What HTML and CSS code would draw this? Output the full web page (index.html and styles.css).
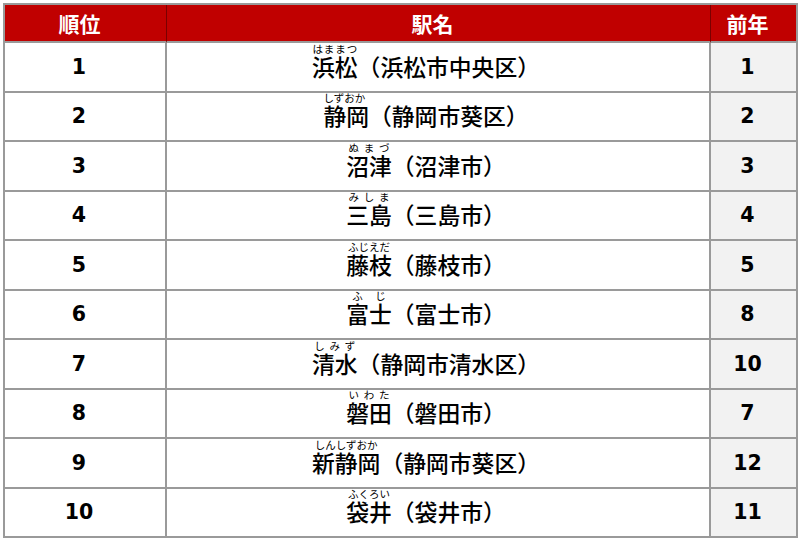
FILE: index.html
```html
<!DOCTYPE html>
<html lang="ja">
<head>
<meta charset="utf-8">
<link rel="stylesheet" href="styles.css">
</head>
<body>
<table class="rank">
  <colgroup><col class="c1"><col class="c2"><col class="c3"></colgroup>
  <thead>
    <tr><th>順位</th><th>駅名</th><th class="last">前年</th></tr>
  </thead>
  <tbody>
    <tr><td class="num">1</td><td class="name"><span class="rb"><span class="rd wide"><span>は</span><span>ま</span><span>ま</span><span>つ</span></span>浜松</span>（浜松市中央区）</td><td class="prev">1</td></tr>
    <tr><td class="num">2</td><td class="name"><span class="rb"><span class="rd left">しずおか</span>静岡</span>（静岡市葵区）</td><td class="prev">2</td></tr>
    <tr><td class="num">3</td><td class="name"><span class="rb"><span class="rd wide"><span>ぬ</span><span>ま</span><span>づ</span></span>沼津</span>（沼津市）</td><td class="prev">3</td></tr>
    <tr><td class="num">4</td><td class="name"><span class="rb"><span class="rd wide"><span>み</span><span>し</span><span>ま</span></span>三島</span>（三島市）</td><td class="prev">4</td></tr>
    <tr><td class="num">5</td><td class="name"><span class="rb"><span class="rd">ふじえだ</span>藤枝</span>（藤枝市）</td><td class="prev">5</td></tr>
    <tr><td class="num">6</td><td class="name"><span class="rb"><span class="rd wide"><span>ふ</span><span>じ</span></span>富士</span>（富士市）</td><td class="prev">8</td></tr>
    <tr><td class="num">7</td><td class="name"><span class="rb"><span class="rd wide"><span>し</span><span>み</span><span>ず</span></span>清水</span>（静岡市清水区）</td><td class="prev">10</td></tr>
    <tr><td class="num">8</td><td class="name"><span class="rb"><span class="rd wide"><span>い</span><span>わ</span><span>た</span></span>磐田</span>（磐田市）</td><td class="prev">7</td></tr>
    <tr><td class="num">9</td><td class="name"><span class="rb"><span class="rd">しんしずおか</span>新静岡</span>（静岡市葵区）</td><td class="prev">12</td></tr>
    <tr><td class="num">10</td><td class="name"><span class="rb"><span class="rd">ふくろい</span>袋井</span>（袋井市）</td><td class="prev">11</td></tr>
  </tbody>
</table>
</body>
</html>
```
FILE: styles.css
```css
html, body {
  margin: 0;
  padding: 0;
  background: #ffffff;
}
body {
  padding: 3px 0 0 3px;
  font-family: "Noto Sans CJK JP", "Noto Sans", sans-serif;
  color: #000;
}
.rank {
  width: 793px;
  table-layout: fixed;
  border-collapse: separate;
  border-spacing: 0;
  border-top: 2px solid #9a9a9a;
  border-left: 2px solid #9a9a9a;
}
.c1 { width: 162px; }
.c2 { width: 544px; }
.c3 { width: 87px; }

.rank th {
  background: #c00000;
  color: #ffffff;
  font-weight: bold;
  font-size: 21px;
  height: 36px;
  padding: 0 12px 0 0;
  line-height: 36px;
  text-align: center;
  border-right: 1px solid #7a0000;
  border-bottom: 2px solid #9a9a9a;
}
.rank th.last {
  border-right: 2px solid #9a9a9a;
}
.rank td {
  height: 47.5px;
  padding: 0 12px 0 0;
  text-align: center;
  vertical-align: middle;
  border-right: 2px solid #9a9a9a;
  border-bottom: 2px solid #9a9a9a;
}
.num, .prev {
  font-family: "DejaVu Sans", sans-serif;
  font-weight: bold;
  font-size: 20.5px;
  line-height: 30px;
}
.prev {
  background: #f2f2f2;
}
.rank td.name {
  font-size: 22.8px;
  font-weight: 500;
  line-height: 30px;
  padding-right: 24px;
}
.rb {
  position: relative;
  display: inline-block;
}
.rd {
  position: absolute;
  left: 0;
  right: 0;
  bottom: 27px;
  font-size: 10.5px;
  font-weight: 400;
  line-height: 12px;
  text-align: center;
  white-space: nowrap;
}
.rd.left {
  text-align: left;
}
.rd.wide {
  display: flex;
  justify-content: space-around;
}
```
